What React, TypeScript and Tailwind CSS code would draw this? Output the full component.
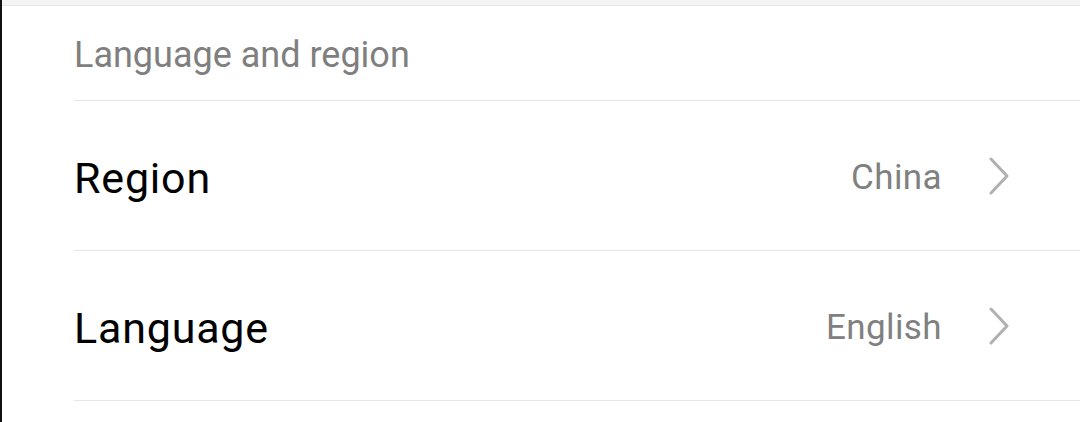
type Row = { label: string; value: string };

const rows: Row[] = [
  { label: "Region", value: "China" },
  { label: "Language", value: "English" },
];

function SettingRow({ label, value }: Row) {
  return (
    <div className="h-[150px] pt-[6px] flex items-center border-b border-[#e6e6e6] pr-[70px]">
      <span className="flex-1 text-[43px] tracking-[0.8px] text-black">{label}</span>
      <span className="text-[35px] tracking-[0.4px] text-[#808080]">{value}</span>
      <svg
        width="22"
        height="38"
        viewBox="0 0 22 38"
        className="ml-[46px] mb-[5px]"
        fill="none"
      >
        <path
          d="M3 2 L19 19 L3 36"
          stroke="#b0b0b0"
          strokeWidth="3"
          strokeLinecap="round"
          strokeLinejoin="round"
        />
      </svg>
    </div>
  );
}

export default function App() {
  return (
    <div
      className="w-[1080px] h-[422px] bg-white border-l-2 border-[#111] overflow-hidden"
      style={{ fontFamily: "Roboto, 'Noto Sans', sans-serif" }}
    >
      <div className="h-[6px] bg-[#f4f4f4] border-b border-[#e6e6e6]" />
      <div className="pl-[72px]">
        <div className="h-[95px] pt-[4px] flex items-center border-b border-[#e6e6e6]">
          <span className="text-[36px] text-[#7f7f7f]">Language and region</span>
        </div>
        {rows.map((r) => (
          <SettingRow key={r.label} {...r} />
        ))}
      </div>
    </div>
  );
}
